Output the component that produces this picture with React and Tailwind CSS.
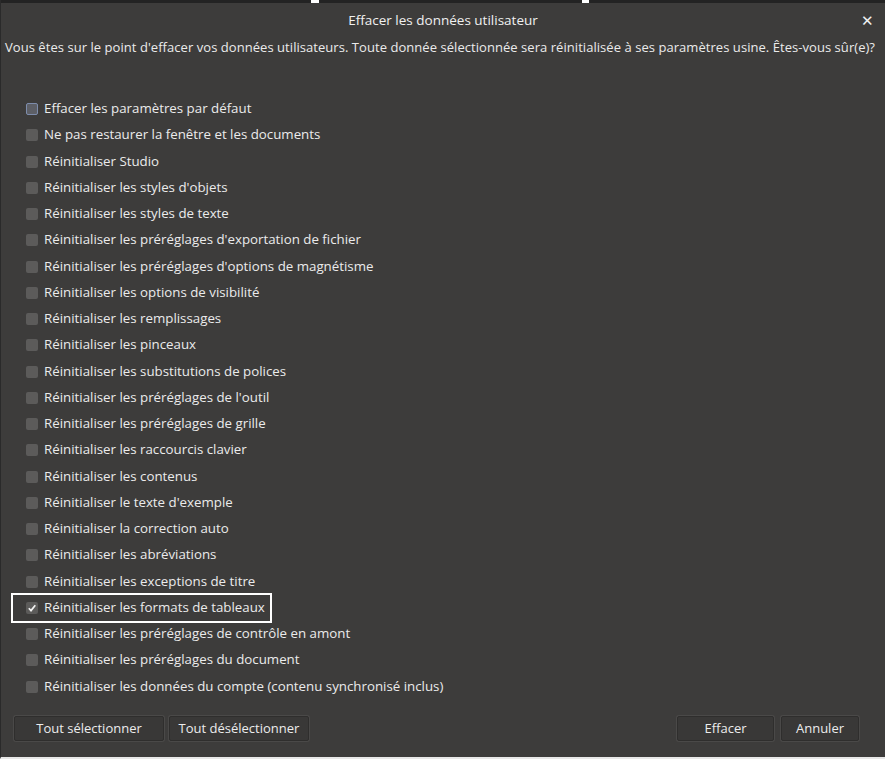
import React from "react";

const items = [
  "Effacer les paramètres par défaut",
  "Ne pas restaurer la fenêtre et les documents",
  "Réinitialiser Studio",
  "Réinitialiser les styles d'objets",
  "Réinitialiser les styles de texte",
  "Réinitialiser les préréglages d'exportation de fichier",
  "Réinitialiser les préréglages d'options de magnétisme",
  "Réinitialiser les options de visibilité",
  "Réinitialiser les remplissages",
  "Réinitialiser les pinceaux",
  "Réinitialiser les substitutions de polices",
  "Réinitialiser les préréglages de l'outil",
  "Réinitialiser les préréglages de grille",
  "Réinitialiser les raccourcis clavier",
  "Réinitialiser les contenus",
  "Réinitialiser le texte d'exemple",
  "Réinitialiser la correction auto",
  "Réinitialiser les abréviations",
  "Réinitialiser les exceptions de titre",
  "Réinitialiser les formats de tableaux",
  "Réinitialiser les préréglages de contrôle en amont",
  "Réinitialiser les préréglages du document",
  "Réinitialiser les données du compte (contenu synchronisé inclus)",
];

function Row({ label, idx }) {
  const checked = idx === 19;
  const focus = idx === 0;
  const box = (
    <span
      className={
        "w-[12px] h-[12px] rounded-[2px] flex items-center justify-center shrink-0 " +
        (focus
          ? "bg-[#5d5f66] border border-[#7d8cab]"
          : "bg-[#5c5b5a]")
      }
    >
      {checked && (
        <svg width="10" height="10" viewBox="0 0 10 10">
          <path d="M1.8 5.2 L4 7.6 L8.3 2.2" fill="none" stroke="#f2f2f2" strokeWidth="1.7" />
        </svg>
      )}
    </span>
  );
  if (checked) {
    return (
      <div className="h-[26.25px] flex items-center">
        <div className="ml-[10px] h-[30px] w-[261px] border-2 border-white flex items-center gap-[6px] pl-[13px]">
          {box}
          <span>{label}</span>
        </div>
      </div>
    );
  }
  return (
    <div className="h-[26.25px] flex items-center gap-[6px] pl-[25px]">
      {box}
      <span>{label}</span>
    </div>
  );
}

function Btn({ children, w }) {
  return (
    <div
      className={
        "h-[25px] rounded-[2px] bg-[#393837] border border-[#2f2e2d] shadow-[0_0_0_1px_#4a4948] flex items-center justify-center text-[#ececec] " +
        w
      }
    >
      {children}
    </div>
  );
}

export default function App() {
  return (
    <div
      className="w-[885px] h-[759px] bg-[#3d3c3b] text-[#ebebeb] relative overflow-hidden flex flex-col border-l border-[#2a2a2a] border-b-2 border-b-[#e8e8e8]"
      style={{ fontFamily: '"Open Sans", "Noto Sans", sans-serif' }}
    >
      <div className="h-[3px] bg-[#232323] relative shrink-0">
        <div className="absolute left-[310px] top-0 w-[8px] h-[3px] bg-white" />
        <div className="absolute left-[581px] top-0 w-[7px] h-[3px] bg-white" />
      </div>
      <div className="h-[35px] flex items-center justify-center relative text-[13.5px] text-[#f0f0f0] shrink-0">
        <span>Effacer les données utilisateur</span>
        <span className="absolute right-[11px] top-[10px] text-[15px] leading-none">✕</span>
      </div>
      <div className="pl-[4px] pt-0 h-[58px] text-[13px] leading-[18px] tracking-[0.05px] whitespace-nowrap shrink-0">
        Vous êtes sur le point d'effacer vos données utilisateurs. Toute donnée sélectionnée sera réinitialisée à ses paramètres usine. Êtes-vous sûr(e)?
      </div>
      <div className="flex flex-col text-[13.3px]">
        {items.map((t, i) => (
          <Row key={i} label={t} idx={i} />
        ))}
      </div>
      <div className="flex-1" />
      <div className="flex items-center px-[13px] pb-[16px] text-[13px]">
        <div className="flex gap-[5px]">
          <Btn w="w-[150px]">Tout sélectionner</Btn>
          <Btn w="w-[140px]">Tout désélectionner</Btn>
        </div>
        <div className="flex-1" />
        <div className="flex gap-[7px] pr-[13px]">
          <Btn w="w-[97px]">Effacer</Btn>
          <Btn w="w-[78px]">Annuler</Btn>
        </div>
      </div>
    </div>
  );
}
